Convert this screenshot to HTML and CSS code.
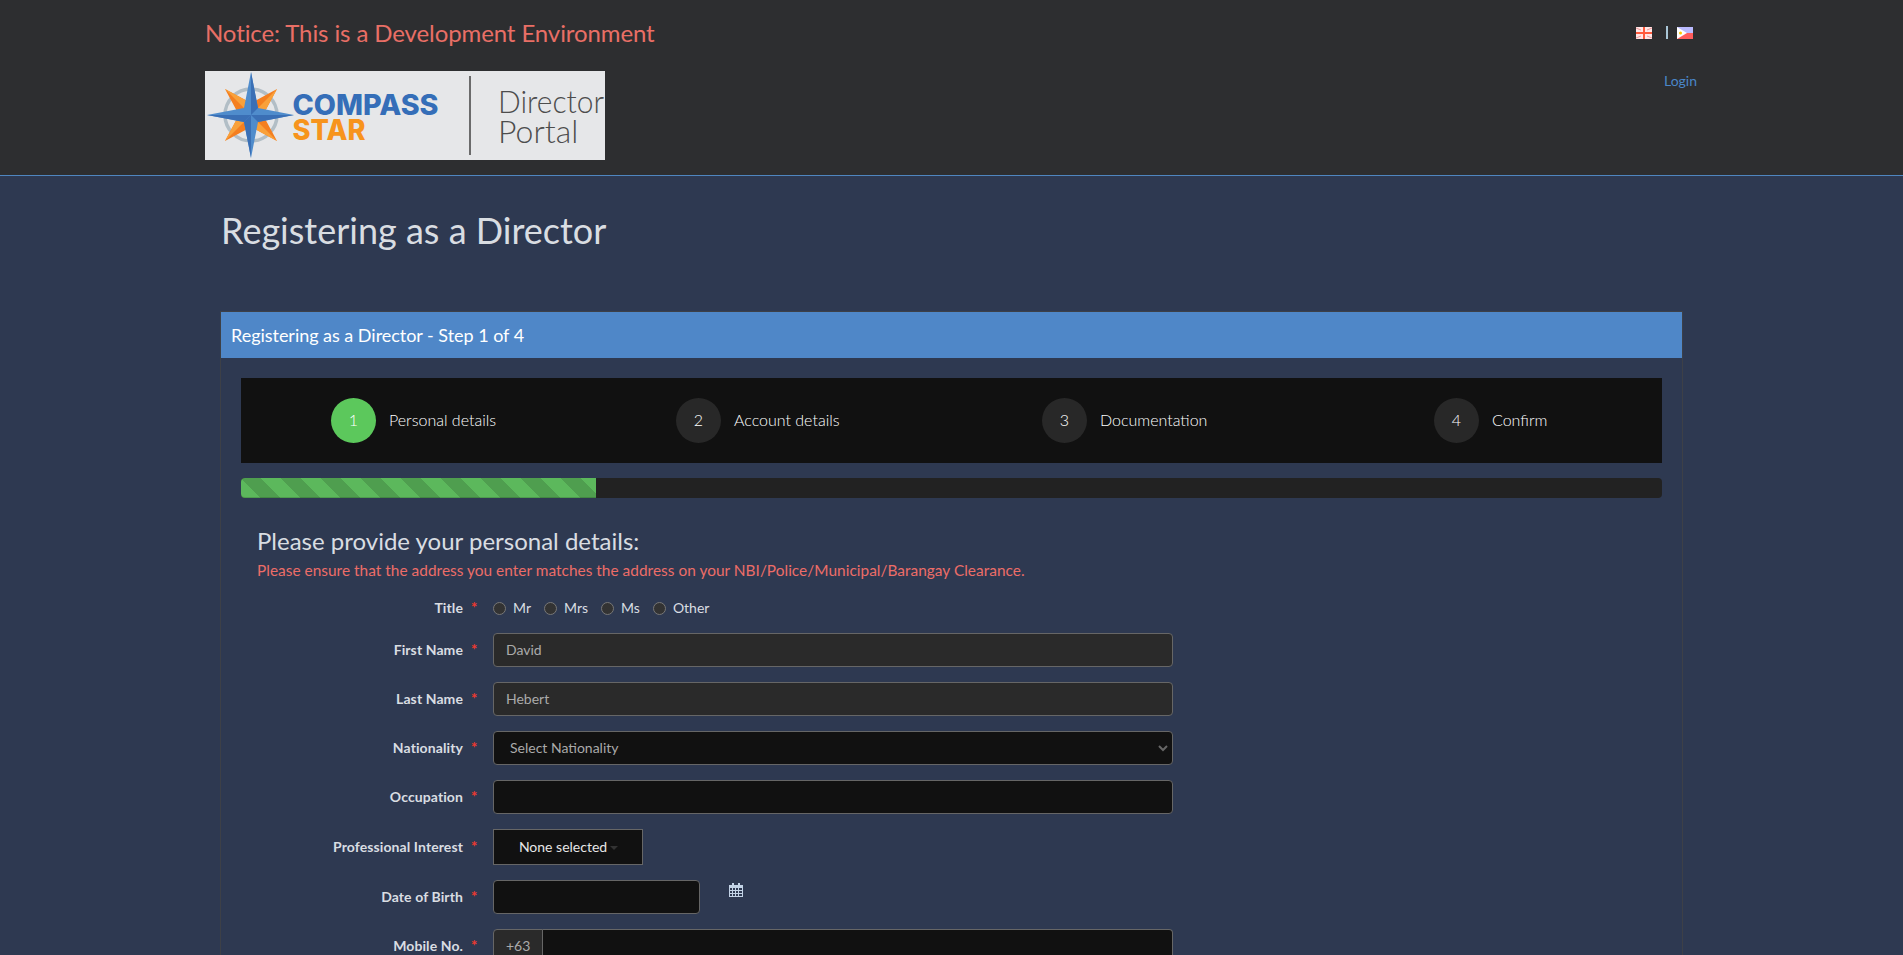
FILE: index.html
```html
<!DOCTYPE html>
<html>
<head>
    <title>Director Portal</title>
    <link rel="stylesheet" href="styles.css">
</head>
<body>
    <header class="site-header">
        <div class="header-top">
            <div class="notice">Notice: This is a Development Environment</div>
            <div class="flags">
                <svg class="flag" viewBox="0 0 16 12">
                    <rect width="16" height="12" fill="#ffe6e6"/>
                    <path d="M0 1l5 2M16 1l-5 2M0 11l5-2M16 11l-5-2" stroke="#ee9a9a" stroke-width="1"/>
                    <rect x="7" width="2" height="12" fill="#ff5a3c"/>
                    <rect y="5" width="16" height="2" fill="#ff5a3c"/>
                </svg>
                <span class="flag-sep"></span>
                <svg class="flag" viewBox="0 0 16 12">
                    <rect width="16" height="6" fill="#babaff"/>
                    <rect y="6" width="16" height="6" fill="#ff5c5c"/>
                    <polygon points="0,0 10,6 0,12" fill="#fff"/>
                    <circle cx="3.5" cy="6" r="1.5" fill="#ffc800"/>
                </svg>
            </div>
        </div>
        <div class="header-bottom">
            <svg class="logo" viewBox="0 0 400 89">
                <rect width="400" height="89" fill="#e6e7e9"/>
                <circle cx="46" cy="44" r="26" fill="none" stroke="#b2bec6" stroke-width="3.5"/>
                <polygon points="20,18 46,32 72,18 58,44 72,70 46,56 20,70 34,44" fill="#f47f20"/>
                <polygon points="20,18 46,32 46,44" fill="#f9a13a"/>
                <polygon points="72,18 58,44 46,44" fill="#f9a13a"/>
                <polygon points="72,70 46,56 46,44" fill="#f9a13a"/>
                <polygon points="20,70 34,44 46,44" fill="#f9a13a"/>
                <polygon points="46,1 53,37 89,44 53,51 46,87 39,51 2,44 39,37" fill="#4f8ccc"/>
                <polygon points="46,44 39,51 2,44" fill="#3a6fb5"/>
                <polygon points="46,44 53,51 89,44" fill="#3a6fb5"/>
                <polygon points="46,44 53,37 46,1" fill="#3a6fb5"/>
                <polygon points="46,44 39,51 46,87" fill="#3a6fb5"/>
                <text class="logo-name" x="87.5" y="44" textLength="146" lengthAdjust="spacingAndGlyphs" fill="#356eb8">COMPASS</text>
                <text class="logo-name" x="87.5" y="69" textLength="73" lengthAdjust="spacingAndGlyphs" fill="#f7941d">STAR</text>
                <rect x="264" y="5" width="2" height="79" fill="#6b6b6b"/>
                <text class="logo-portal" x="293" y="42" textLength="106" lengthAdjust="spacingAndGlyphs">Director</text>
                <text class="logo-portal" x="293" y="72">Portal</text>
            </svg>
            <a class="login" href="#">Login</a>
        </div>
    </header>

    <main class="page">
        <h1>Registering as a Director</h1>
        <section class="panel">
            <div class="panel-heading">Registering as a Director - Step 1 of 4</div>
            <div class="panel-body">
                <div class="steps">
                    <div class="step active"><span class="step-num">1</span><span class="step-text">Personal details</span></div>
                    <div class="step"><span class="step-num">2</span><span class="step-text">Account details</span></div>
                    <div class="step"><span class="step-num">3</span><span class="step-text">Documentation</span></div>
                    <div class="step"><span class="step-num">4</span><span class="step-text">Confirm</span></div>
                </div>
                <div class="progress"><div class="progress-bar"></div></div>

                <form class="details">
                    <h3>Please provide your personal details:</h3>
                    <p class="warning">Please ensure that the address you enter matches the address on your NBI/Police/Municipal/Barangay Clearance.</p>

                    <div class="row row-title">
                        <label class="field-label">Title <span class="req">*</span></label>
                        <div class="radios">
                            <label><input type="radio" name="title">Mr</label>
                            <label><input type="radio" name="title">Mrs</label>
                            <label><input type="radio" name="title">Ms</label>
                            <label><input type="radio" name="title">Other</label>
                        </div>
                    </div>
                    <div class="row">
                        <label class="field-label">First Name <span class="req">*</span></label>
                        <input class="control filled" type="text" value="David">
                    </div>
                    <div class="row">
                        <label class="field-label">Last Name <span class="req">*</span></label>
                        <input class="control filled" type="text" value="Hebert">
                    </div>
                    <div class="row">
                        <label class="field-label">Nationality <span class="req">*</span></label>
                        <select class="control select"><option>Select Nationality</option></select>
                    </div>
                    <div class="row">
                        <label class="field-label">Occupation <span class="req">*</span></label>
                        <input class="control" type="text">
                    </div>
                    <div class="row">
                        <label class="field-label">Professional Interest <span class="req">*</span></label>
                        <button class="multi" type="button">None selected<span class="caret"></span></button>
                    </div>
                    <div class="row">
                        <label class="field-label">Date of Birth <span class="req">*</span></label>
                        <input class="control date" type="text">
                        <svg class="calendar" viewBox="0 0 14 14">
                            <path d="M3 0h2v2H3zM9 0h2v2H9z" fill="#c3d3e6"/>
                            <path d="M0 2h14v12H0zM1 5v2h2V5zm3 0v2h2V5zm3 0v2h2V5zm3 0v2h3V5zM1 8v2h2V8zm3 0v2h2V8zm3 0v2h2V8zm3 0v2h3V8zM1 11v2h2v-2zm3 0v2h2v-2zm3 0v2h2v-2zm3 0v2h3v-2z" fill="#c3d3e6" fill-rule="evenodd"/>
                        </svg>
                    </div>
                    <div class="row">
                        <label class="field-label">Mobile No. <span class="req">*</span></label>
                        <div class="input-group">
                            <span class="addon">+63</span>
                            <input class="group-input" type="text">
                        </div>
                    </div>
                </form>
            </div>
        </section>
    </main>
</body>
</html>
```

FILE: styles.css
```css
html, body {
    height: 100%;
    overflow: hidden;
}
body {
    margin: 0;
    font-family: Lato, "Open Sans", sans-serif;
    font-size: 14px;
    color: #d9dde2;
    background-color: #2e3951;
}
.site-header {
    height: 175px;
    padding: 0 206px 0 205px;
    background-color: #2d2e30;
    border-bottom: 1px solid #4f86c0;
}
.header-top {
    display: flex;
    justify-content: space-between;
    height: 71px;
}
.notice {
    margin-top: 18px;
    font-size: 24px;
    line-height: 29px;
    letter-spacing: -0.1px;
    color: #e96f66;
}
.flags {
    display: flex;
    align-items: flex-start;
    margin-top: 27px;
    margin-right: 4px;
}
.flag {
    display: block;
    width: 16px;
    height: 12px;
}
.flag-sep {
    width: 2px;
    height: 13px;
    margin: -1px 9px 0 14px;
    background-color: #a9c6d6;
}
.header-bottom {
    display: flex;
    justify-content: space-between;
}
.logo {
    display: block;
    width: 400px;
    height: 89px;
}
.logo-name {
    font-family: Inter, sans-serif;
    font-size: 28px;
    font-weight: 800;
}
.logo-portal {
    font-family: Lato, sans-serif;
    font-size: 32px;
    font-weight: 300;
    fill: #4d4d4d;
}
.login {
    margin-top: 1px;
    font-size: 14px;
    line-height: 17px;
    color: #4a86c8;
    text-decoration: none;
}
.page {
    padding: 0 220px;
}
h1 {
    margin: 32px 0 0 1px;
    font-size: 36px;
    font-weight: 400;
    line-height: 44px;
    color: #d9dde2;
}
.panel {
    margin-top: 59px;
    border: 1px solid #3d4047;
}
.panel-heading {
    height: 46px;
    padding-left: 10px;
    font-size: 18px;
    line-height: 46px;
    letter-spacing: -0.03px;
    color: #fff;
    background-color: #4f87c8;
}
.panel-body {
    padding: 20px 20px 40px;
}
.steps {
    display: grid;
    grid-template-columns: 345px 366px 392px 1fr;
    align-items: center;
    height: 85px;
    padding-left: 90px;
    background-color: #111;
}
.step {
    display: flex;
    align-items: center;
    font-size: 16px;
    font-weight: 300;
    color: #fff;
}
.step-num {
    display: block;
    width: 45px;
    height: 45px;
    margin-right: 13px;
    border-radius: 50%;
    line-height: 43px;
    text-align: center;
    background-color: #282828;
}
.step-text {
    margin-bottom: 2px;
}
.step.active .step-num {
    color: #fff;
    background-color: #5cc85c;
}
.progress {
    height: 20px;
    margin-top: 15px;
    border-radius: 4px;
    background-color: #222;
}
.progress-bar {
    width: 25%;
    height: 100%;
    border-radius: 4px 0 0 4px;
    box-shadow: inset 0 -1px 0 rgba(0, 0, 0, 0.15);
    background-color: #5cb85c;
    background-image: linear-gradient(45deg, rgba(0, 0, 0, 0.14) 25%, transparent 25%, transparent 50%, rgba(0, 0, 0, 0.14) 50%, rgba(0, 0, 0, 0.14) 75%, transparent 75%, transparent);
    background-size: 40px 40px;
}
.details {
    padding-left: 16px;
}
h3 {
    margin: 28px 0 0;
    font-size: 24px;
    font-weight: 400;
    line-height: 30px;
    color: #d9dde2;
}
.warning {
    margin: 5px 0 19px;
    font-size: 15.4px;
    line-height: 18px;
    letter-spacing: 0.03px;
    color: #ec6d68;
}
.row {
    display: flex;
    align-items: center;
    margin-bottom: 15px;
}
.row-title {
    height: 20px;
}
.field-label {
    position: relative;
    flex: none;
    width: 206px;
    margin-right: 30px;
    margin-bottom: 2px;
    font-weight: 700;
    letter-spacing: 0.1px;
    text-align: right;
    color: #d9dde2;
}
.req {
    position: absolute;
    left: 214px;
    top: -1px;
    font-size: 15px;
    color: #f03a30;
}
.radios {
    display: flex;
    gap: 13px;
    margin-bottom: 2px;
}
.radios label {
    display: flex;
    align-items: center;
}
.radios input {
    appearance: none;
    width: 13px;
    height: 13px;
    margin: 2px 7px 0 0;
    border: 1px solid #777;
    border-radius: 50%;
    background-color: #333;
}
.control {
    box-sizing: border-box;
    width: 680px;
    height: 34px;
    padding: 0 12px 2px;
    border: 1px solid #666;
    border-radius: 4px;
    font-family: inherit;
    font-size: 14px;
    color: #aaa;
    background-color: #111;
}
.control.filled {
    background-color: #2a2a2a;
}
.select {
    appearance: none;
    padding-left: 16px;
    background-image: url("data:image/svg+xml,%3Csvg xmlns='http://www.w3.org/2000/svg' width='10' height='7'%3E%3Cpath d='M1 1l4 4 4-4' fill='none' stroke='%23666' stroke-width='2'/%3E%3C/svg%3E");
    background-repeat: no-repeat;
    background-position: right 4px center;
}
.control.date {
    width: 207px;
}
.calendar {
    align-self: flex-start;
    width: 14px;
    height: 14px;
    margin: 3px 0 0 29px;
}
.multi {
    box-sizing: border-box;
    width: 150px;
    height: 36px;
    padding: 0 0 2px 1px;
    border: 1px solid #666;
    font-family: inherit;
    font-size: 14px;
    color: #e6e6e6;
    background-color: #111;
}
.caret {
    display: inline-block;
    margin-left: 3px;
    vertical-align: middle;
    border-top: 4px solid #333;
    border-left: 4px solid transparent;
    border-right: 4px solid transparent;
}
.input-group {
    display: flex;
    width: 680px;
    height: 34px;
}
.addon {
    box-sizing: border-box;
    width: 50px;
    padding-left: 12px;
    border: 1px solid #666;
    border-radius: 4px 0 0 4px;
    line-height: 32px;
    color: #aaa;
    background-color: #2a2a2a;
}
.group-input {
    box-sizing: border-box;
    flex: 1;
    border: 1px solid #666;
    border-left: 0;
    border-radius: 0 4px 4px 0;
    background-color: #111;
}
```
